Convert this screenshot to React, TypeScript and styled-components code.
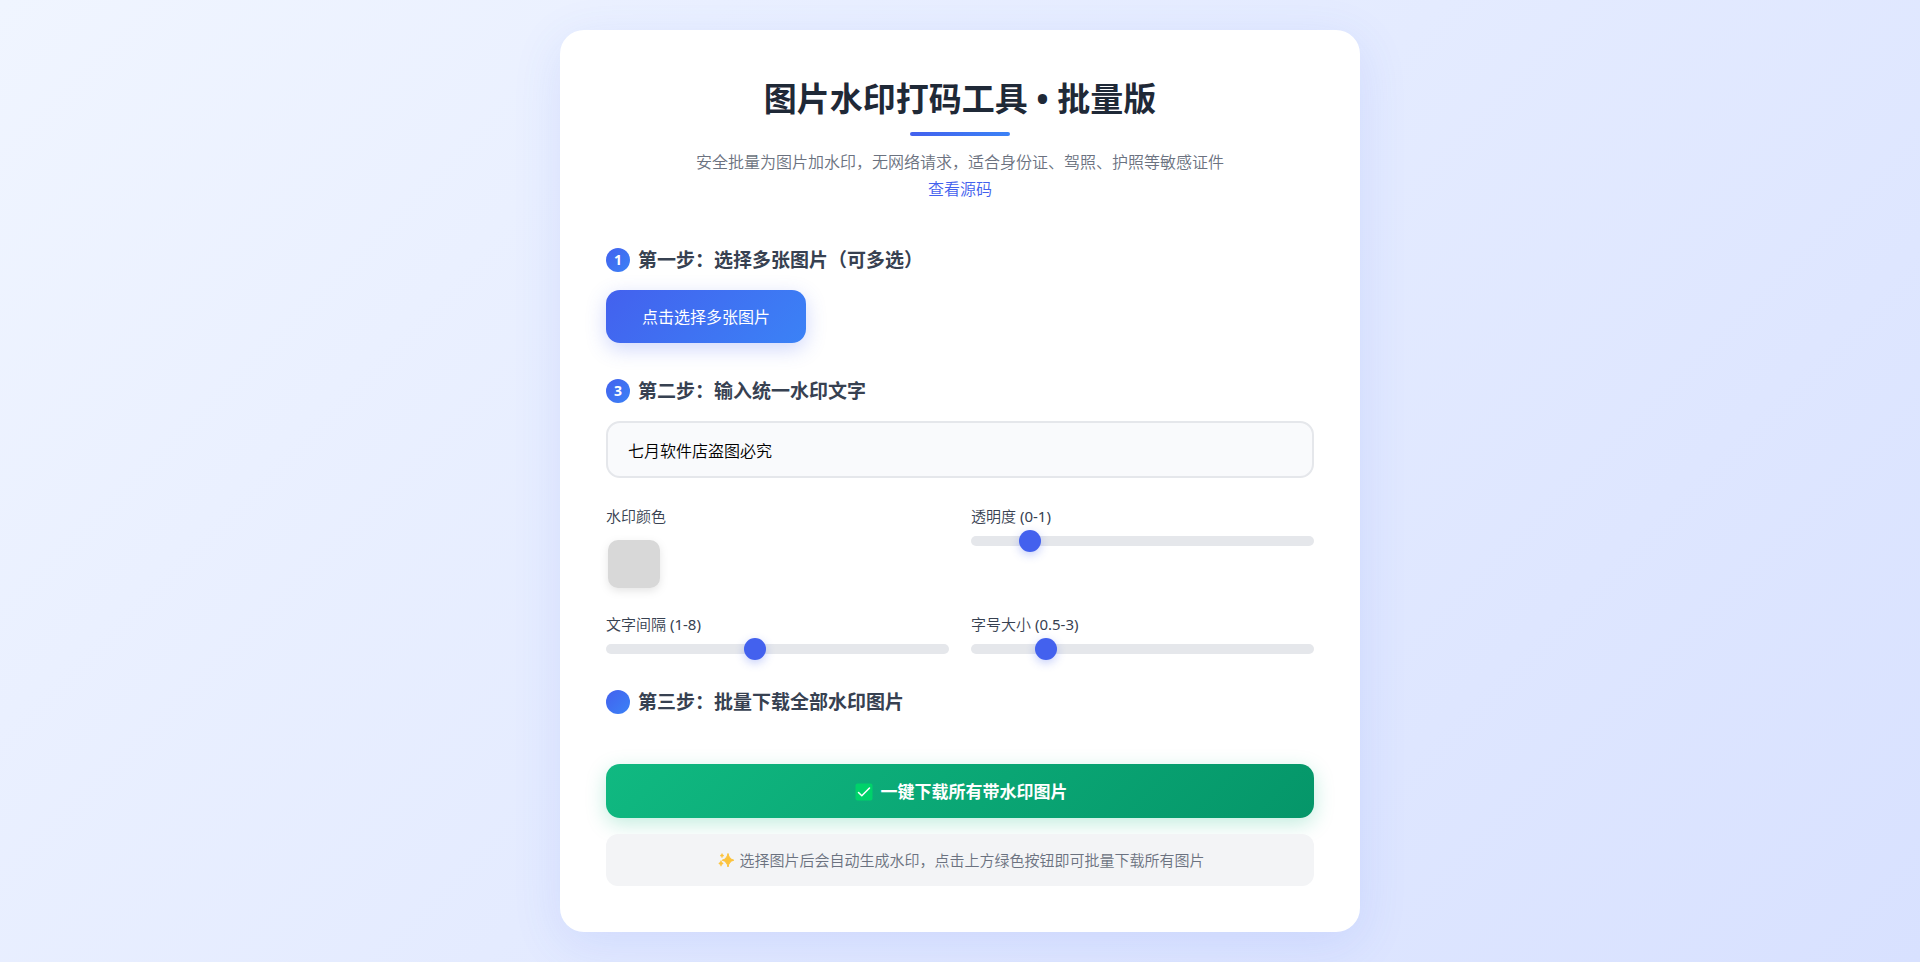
import React, { useState } from "react";
import styled, { createGlobalStyle } from "styled-components";

const GlobalStyle = createGlobalStyle`
  *, *::before, *::after { box-sizing: border-box; }
  body {
    margin: 0;
    font-family: "Noto Sans", "Noto Sans CJK SC", sans-serif;
    font-weight: 350;
    color: #374151;
  }
  button, input { font-family: inherit; font-weight: inherit; }
`;

const Page = styled.div`
  min-height: 100vh;
  padding: 30px 20px;
  background: linear-gradient(135deg, #f0f5ff 0%, #d8e1ff 100%);
`;

const Card = styled.main`
  max-width: 800px;
  margin: 0 auto;
  padding: 46px;
  border-radius: 24px;
  background: #fff;
  box-shadow: 0 12px 50px rgba(67, 97, 238, 0.12);
`;

const Header = styled.header`
  display: flex;
  flex-direction: column;
  align-items: center;
  text-align: center;
`;

const Title = styled.h1`
  margin: 0;
  font-size: 33px;
  line-height: 46px;
  font-weight: 700;
  color: #1f2937;

  &::after {
    content: "";
    display: block;
    width: 100px;
    height: 4px;
    margin: 10px auto 0;
    border-radius: 2px;
    background: linear-gradient(90deg, #4361ee, #3b82f6);
  }
`;

const Subtitle = styled.p`
  margin: 13px 0 0;
  font-size: 16px;
  line-height: 27px;
  color: #6b7280;
`;

const SourceLink = styled.a`
  color: #4361ee;
  text-decoration: none;
`;

const Step = styled.section<{ $gap: number }>`
  margin-top: ${(p) => p.$gap}px;
`;

const StepTitle = styled.h2`
  display: flex;
  align-items: center;
  gap: 8px;
  margin: 0 0 18px;
  font-size: 19px;
  line-height: 24px;
  font-weight: 700;
  color: #374151;
`;

const StepBadge = styled.span`
  display: flex;
  align-items: center;
  justify-content: center;
  width: 24px;
  height: 24px;
  border-radius: 50%;
  background: linear-gradient(135deg, #4361ee, #3b82f6);
  color: #fff;
  font-size: 14px;
`;

const PickButton = styled.button`
  display: block;
  padding: 15px 36px 13px;
  border: 0;
  border-radius: 14px;
  background: linear-gradient(135deg, #4361ee, #3b82f6);
  box-shadow: 0 6px 20px rgba(67, 97, 238, 0.25);
  color: #fff;
  font-size: 16px;
  line-height: 25px;
  font-weight: 400;
  cursor: pointer;
`;

const TextInput = styled.input`
  display: block;
  width: 100%;
  height: 57px;
  padding: 0 20px;
  border: 2px solid #e5e7eb;
  border-radius: 14px;
  background: #f9fafc;
  color: #000;
  font-size: 16px;
`;

const Options = styled.div`
  display: grid;
  grid-template-columns: 1fr 1fr;
  gap: 22px;
  margin-top: 26px;
`;

const Field = styled.div`
  display: flex;
  flex-direction: column;
  align-items: flex-start;
`;

const Label = styled.label`
  font-size: 15px;
  line-height: 24px;
`;

const Bounds = styled.span`
  font-weight: 400;
`;

const ColorInput = styled.input`
  width: 56px;
  height: 52px;
  margin-top: 10px;
  padding: 2px;
  border: 0;
  background: none;
  filter: drop-shadow(0 3px 4px rgba(0, 0, 0, 0.1));
  cursor: pointer;

  &::-webkit-color-swatch-wrapper { padding: 0; }
  &::-webkit-color-swatch {
    border: 0;
    border-radius: 10px;
  }
`;

const Range = styled.input`
  appearance: none;
  width: 100%;
  height: 10px;
  margin: 8px 0 0;
  border-radius: 5px;
  background: #e5e7eb;
  cursor: pointer;

  &::-webkit-slider-thumb {
    appearance: none;
    width: 22px;
    height: 22px;
    border-radius: 50%;
    background: #4361ee;
    box-shadow: 0 3px 10px rgba(67, 97, 238, 0.3);
  }
`;

const DownloadButton = styled.button`
  display: flex;
  align-items: center;
  justify-content: center;
  gap: 8px;
  width: 100%;
  margin-top: 50px;
  padding: 15px 14px 13px 16px;
  border: 0;
  border-radius: 14px;
  background: linear-gradient(135deg, #10b981, #059669);
  box-shadow: 0 6px 20px rgba(16, 185, 129, 0.25);
  color: #fff;
  font-size: 17px;
  line-height: 26px;
  font-weight: 700;
  cursor: pointer;
`;

const Hint = styled.p`
  display: flex;
  align-items: center;
  justify-content: center;
  gap: 4px;
  margin: 16px 0 0;
  padding: 14px 14px 14px 16px;
  border-radius: 12px;
  background: #f3f4f6;
  color: #6b7280;
  font-size: 15px;
  line-height: 24px;
`;

const CheckIcon = () => (
  <svg width="18" height="18" viewBox="0 0 18 18" aria-hidden="true">
    <rect x="0.5" y="0.5" width="17" height="17" rx="2" fill="#00d26a" />
    <path d="M3.5 9.5 L6.8 12.8 L14.5 5" fill="none" stroke="#fff" strokeWidth="1.5" strokeLinecap="round" strokeLinejoin="round" />
  </svg>
);

const SparklesIcon = () => (
  <svg width="18" height="18" viewBox="0 0 18 18" aria-hidden="true" fill="#fcc33c">
    <path d="M11 2.5 Q12 8 16.8 9.2 Q12 10.3 11 16 Q10 10.3 5.2 9.2 Q10 8 11 2.5Z" stroke="#fcc33c" strokeLinejoin="round" />
    <path d="M5 2.5 Q5.4 4.2 7 4.6 Q5.4 5 5 6.7 Q4.6 5 3 4.6 Q4.6 4.2 5 2.5Z" stroke="#fcc33c" strokeWidth="0.5" />
    <path d="M4 9.5 Q4.5 11.8 6.3 12.4 Q4.5 13 4 15.3 Q3.5 13 1.7 12.4 Q3.5 11.8 4 9.5Z" stroke="#fcc33c" strokeWidth="0.5" />
  </svg>
);

interface SliderProps {
  id: string;
  label: string;
  min: number;
  max: number;
  step: number;
  initial: number;
}

const Slider = ({ id, label, min, max, step, initial }: SliderProps) => {
  const [value, setValue] = useState(initial);
  return (
    <Field>
      <Label htmlFor={id}>
        {label} <Bounds>{`(${min}-${max})`}</Bounds>
      </Label>
      <Range
        id={id}
        type="range"
        min={min}
        max={max}
        step={step}
        value={value}
        onChange={(e) => setValue(Number(e.target.value))}
      />
    </Field>
  );
};

export default function App() {
  const [text, setText] = useState("七月软件店盗图必究");
  const [color, setColor] = useState("#d8d8d8");

  return (
    <>
      <GlobalStyle />
      <Page lang="zh-CN">
        <Card>
          <Header>
            <Title>图片水印打码工具 • 批量版</Title>
            <Subtitle>
              安全批量为图片加水印，无网络请求，适合身份证、驾照、护照等敏感证件
              <br />
              <SourceLink href="#source">查看源码</SourceLink>
            </Subtitle>
          </Header>

          <Step $gap={45}>
            <StepTitle>
              <StepBadge>1</StepBadge>第一步：选择多张图片（可多选）
            </StepTitle>
            <PickButton type="button">点击选择多张图片</PickButton>
          </Step>

          <Step $gap={36}>
            <StepTitle>
              <StepBadge>3</StepBadge>
              <label htmlFor="watermark-text">第二步：输入统一水印文字</label>
            </StepTitle>
            <TextInput
              id="watermark-text"
              type="text"
              value={text}
              onChange={(e) => setText(e.target.value)}
            />
            <Options>
              <Field>
                <Label htmlFor="watermark-color">水印颜色</Label>
                <ColorInput
                  id="watermark-color"
                  type="color"
                  value={color}
                  onChange={(e) => setColor(e.target.value)}
                />
              </Field>
              <Slider id="opacity" label="透明度" min={0} max={1} step={0.05} initial={0.15} />
              <Slider id="spacing" label="文字间隔" min={1} max={8} step={0.5} initial={4} />
              <Slider id="font-size" label="字号大小" min={0.5} max={3} step={0.1} initial={1} />
            </Options>
          </Step>

          <Step $gap={36}>
            <StepTitle>
              <StepBadge />第三步：批量下载全部水印图片
            </StepTitle>
            <DownloadButton type="button">
              <CheckIcon />
              一键下载所有带水印图片
            </DownloadButton>
            <Hint>
              <SparklesIcon />
              选择图片后会自动生成水印，点击上方绿色按钮即可批量下载所有图片
            </Hint>
          </Step>
        </Card>
      </Page>
    </>
  );
}
